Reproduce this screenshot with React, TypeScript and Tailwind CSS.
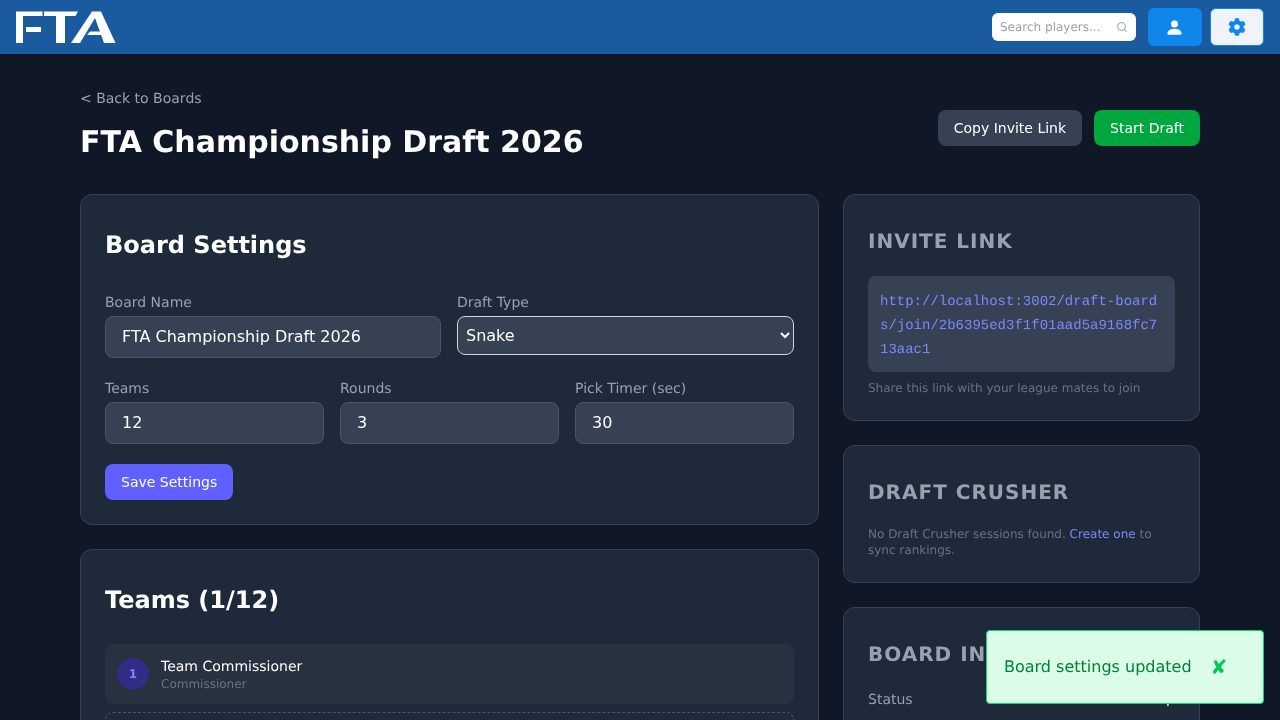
import { Search } from 'lucide-react';
import { FaCog } from 'react-icons/fa';
import { BsPersonFill } from 'react-icons/bs';

const inputClass =
  'w-full h-[42px] rounded-lg border border-gray-600 bg-gray-700 px-4 pb-px text-base text-white outline-none';
const labelClass = 'block mb-[3px] pt-px text-sm text-gray-400';
const cardClass = 'rounded-xl border border-gray-700 bg-gray-800 p-6';
const sideTitle = 'text-xl font-bold tracking-[1px] uppercase text-gray-400 leading-[44px]';

function Logo() {
  return (
    <svg width="100" height="32" viewBox="0 0 100 32" fill="#fff">
      <path d="M0 .5H26.500V5H7V32H0Z" />
      <path d="M10 16H25V21H10Z" />
      <path d="M28 .5H62L59.500 5H49V32H40V5H28Z" />
      <path d="M76 .5H85L99.500 32H88L79 7L64 32H55Z" />
      <path d="M74 20.500H86L87.500 24H71Z" />
    </svg>
  );
}

function Field({ label, value }: { label: string; value: string }) {
  return (
    <div>
      <label className={labelClass}>{label}</label>
      <input className={inputClass} defaultValue={value} />
    </div>
  );
}

export default function App() {
  return (
    <div className="relative h-screen overflow-hidden bg-gray-900 font-['DejaVu_Sans',sans-serif] text-white will-change-transform [text-rendering:geometricPrecision]">
      <nav className="flex h-[54px] items-center justify-between bg-[#1a5a9e] px-4">
        <Logo />
        <div className="flex items-center gap-2">
          <div className="mr-1 flex h-7 w-36 items-center justify-between rounded-md bg-white px-2">
            <span className="text-xs text-gray-400">Search players...</span>
            <Search size={12} className="text-gray-400" />
          </div>
          <button className="flex h-[38px] w-[54px] items-center justify-center rounded-md bg-[#0f86ec]">
            <BsPersonFill size={19} className="mr-0.5 text-white" />
          </button>
          <button className="flex h-[38px] w-[54px] items-center justify-center rounded-md border border-[#0f86ec] bg-[#f0f4fa]">
            <FaCog size={18} className="text-[#0f86ec]" />
          </button>
        </div>
      </nav>

      <main className="mx-auto w-[1120px] pt-[35px]">
        <div className="mb-[27px] flex items-end justify-between">
          <div>
            <a className="mb-[10px] block text-sm text-gray-400">&lt; Back to Boards</a>
            <h1 className="text-[30px] font-bold leading-[48px]">FTA Championship Draft 2026</h1>
          </div>
          <div className="mb-[21px] flex gap-3">
            <button className="h-9 rounded-lg bg-gray-700 px-4 text-sm">Copy Invite Link</button>
            <button className="h-9 rounded-lg bg-green-600 px-4 text-sm">Start Draft</button>
          </div>
        </div>

        <div className="grid grid-cols-[739px_357px] gap-6">
          <div className="flex flex-col gap-6">
            <section className={cardClass}>
              <h2 className="mb-[21px] text-2xl font-bold leading-[52px]">Board Settings</h2>
              <div className="mb-5 grid grid-cols-[336px_337px] gap-4">
                <Field label="Board Name" value="FTA Championship Draft 2026" />
                <div>
                  <label className={labelClass}>Draft Type</label>
                  <select className="h-[39px] w-full rounded-lg border border-gray-300 bg-gray-700 px-1 text-base text-white outline-none">
                    <option>Snake</option>
                  </select>
                </div>
              </div>
              <div className="mb-5 grid grid-cols-3 gap-4">
                <Field label="Teams" value="12" />
                <Field label="Rounds" value="3" />
                <Field label="Pick Timer (sec)" value="30" />
              </div>
              <button className="h-9 rounded-lg bg-indigo-500 px-4 text-sm">Save Settings</button>
            </section>

            <section className={cardClass}>
              <h2 className="mb-[18px] text-2xl font-bold leading-[52px]">Teams (1/12)</h2>
              <div className="flex h-[60px] items-center gap-3 rounded-lg bg-[#273140] px-3">
                <div className="flex h-8 w-8 items-center justify-center rounded-full bg-indigo-900 text-xs font-bold text-indigo-400">1</div>
                <div>
                  <div className="-mb-px pt-px text-sm leading-5">Team Commissioner</div>
                  <div className="text-xs leading-4 text-gray-500">Commissioner</div>
                </div>
              </div>
              <div className="mt-2 h-[60px] rounded-lg border border-dashed border-gray-600" />
            </section>
          </div>

          <div className="flex flex-col gap-6">
            <section className={cardClass}>
              <h3 className={`${sideTitle} mb-[13px]`}>Invite Link</h3>
              <div className="break-all rounded-lg bg-gray-700 px-3 pb-[10px] pt-[14px] font-['Liberation_Mono',monospace] text-sm leading-6 text-indigo-400">
                http://localhost:3002/draft-boards/join/2b6395ed3f1f01aad5a9168fc713aac1
              </div>
              <p className="mt-2 text-xs leading-4 text-gray-500">Share this link with your league mates to join</p>
            </section>

            <section className={cardClass}>
              <h3 className={`${sideTitle} mb-3`}>Draft Crusher</h3>
              <p className="text-xs leading-4 text-gray-500">
                No Draft Crusher sessions found. <a className="text-indigo-400">Create one</a> to sync rankings.
              </p>
            </section>

            <section className={cardClass}>
              <h3 className={`${sideTitle} mb-[14px]`}>Board Info</h3>
              <div className="flex justify-between text-sm">
                <span className="text-gray-400">Status</span>
                <span className="-mt-px text-white">Setup</span>
              </div>
            </section>
          </div>
        </div>
      </main>

      <div className="absolute left-[986px] top-[630px] flex h-[74px] w-[278px] items-center rounded border border-green-400 bg-green-100 pl-[17px]">
        <span className="text-base text-green-700">Board settings updated</span>
        <span className="ml-[19px] text-xl font-bold text-green-500">✘</span>
      </div>
    </div>
  );
}
